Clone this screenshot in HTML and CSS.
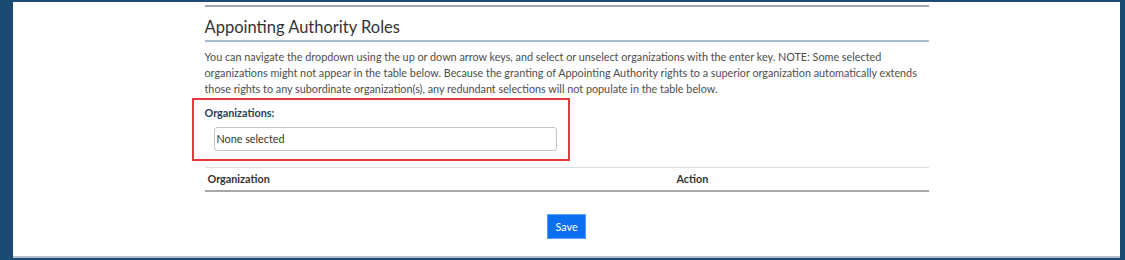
FILE: index.html
```html
<!DOCTYPE html>
<html lang="en">
<head>
<meta charset="utf-8">
<title>Appointing Authority Roles</title>
<link rel="stylesheet" href="styles.css">
</head>
<body>
<div class="frame">
  <div class="panel">
    <div class="content">
      <h2 class="section-title prev">Admin Notes</h2>
      <h2 class="section-title">Appointing Authority Roles</h2>
      <p class="help">You can navigate the dropdown using the up or down arrow keys, and select or unselect organizations with the enter key. NOTE: Some selected organizations might not appear in the table below. Because the granting of Appointing Authority rights to a superior organization automatically extends those rights to any subordinate organization(s), any redundant selections will not populate in the table below.</p>
      <div class="field">
        <div class="highlight"></div>
        <label class="field-label">Organizations:</label>
        <div class="select">None selected</div>
      </div>
      <table class="roles">
        <thead>
          <tr><th class="col-org">Organization</th><th>Action</th></tr>
        </thead>
      </table>
      <div class="actions"><button class="btn-save">Save</button></div>
    </div>
  </div>
</div>
</body>
</html>
```
FILE: styles.css
```css
html, body { margin: 0; padding: 0; }
body {
  background: #1b4a73;
  font-family: "Lato", "Open Sans", sans-serif;
  width: 1125px;
  height: 260px;
  overflow: hidden;
}
.frame {
  padding: 2px 5px 0 13px;
  height: 258px;
  box-sizing: border-box;
}
.panel {
  background: #fff;
  height: 254px;
  border-bottom: 2px solid #b4c0cc;
  overflow: hidden;
}
.content {
  width: 724px;
  margin: 0 auto;
}
.section-title {
  margin: 9px 0 0;
  font-size: 16.5px;
  font-weight: 400;
  line-height: 22px;
  padding-bottom: 2px;
  color: #333;
  border-bottom: 2px solid #a9bbcc;
}
.section-title.prev {
  margin-top: -21px;
  border-bottom-color: #a6a6a6;
}
.help {
  margin: 7px 0 0;
  font-size: 10.8px;
  line-height: 16px;
  color: #4d4d4d;
}
.field {
  position: relative;
  margin-top: 8px;
  padding-bottom: 10px;
}
.highlight {
  position: absolute;
  left: -13px;
  top: -7px;
  width: 378px;
  height: 63px;
  box-sizing: border-box;
  border: 2px solid #e8383d;
  pointer-events: none;
}
.field-label {
  display: block;
  font-size: 10.8px;
  line-height: 16px;
  font-weight: 700;
  color: #1f3f62;
}
.select {
  margin: 6px 0 0 9px;
  width: 343px;
  height: 24px;
  box-sizing: border-box;
  border: 1px solid #c4c4c4;
  border-radius: 3px;
  padding: 0 2px;
  font-size: 10.8px;
  line-height: 22px;
  color: #333;
}
.roles {
  width: 100%;
  margin-top: 6px;
  border-collapse: collapse;
  border-top: 1px solid #dcdcdc;
  border-bottom: 2px solid #a8a8a8;
}
.roles th {
  text-align: left;
  font-size: 10.8px;
  font-weight: 700;
  color: #333;
  height: 21px;
  padding: 0 3px 1px;
}
.roles th.col-org { width: 463px; }
.actions {
  display: flex;
  justify-content: center;
  margin-top: 22px;
}
.btn-save {
  width: 39px;
  height: 25px;
  border: 1px solid #5aa0f0;
  background: #0b6ff0;
  color: #fff;
  font-family: "Lato", sans-serif;
  font-size: 10.8px;
  padding: 0;
}
```
